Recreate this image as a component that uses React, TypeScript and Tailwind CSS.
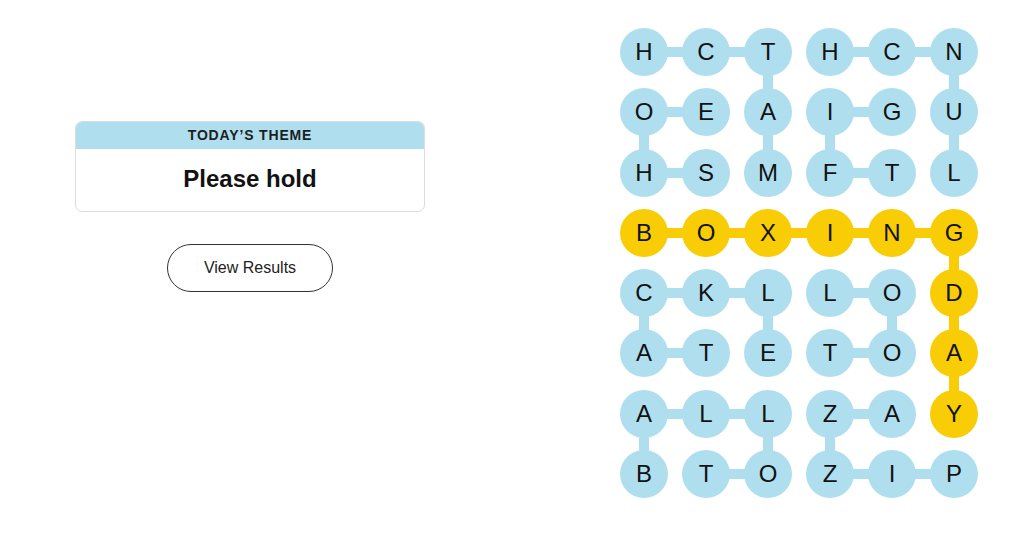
import React from 'react';

const LETTERS = [
  'HCTHCN',
  'OEAIGU',
  'HSMFTL',
  'BOXING',
  'CKLLOD',
  'ATETOA',
  'ALLZAY',
  'BTOZIP',
];

// cells (row, col) that are part of the found spangram
const GOLD = new Set(['3-0', '3-1', '3-2', '3-3', '3-4', '3-5', '4-5', '5-5', '6-5']);

// links to the right neighbour
const RIGHT = new Set([
  '0-0', '0-1', '0-3', '0-4',
  '1-0', '1-3',
  '2-0', '2-3',
  '3-0', '3-1', '3-2', '3-3', '3-4',
  '4-0', '4-1', '4-3',
  '5-0', '5-3',
  '6-0', '6-1', '6-3',
  '7-1', '7-3', '7-4',
]);

// links to the cell below
const DOWN = new Set([
  '0-2', '0-5',
  '1-0', '1-2', '1-3', '1-5',
  '3-5',
  '4-0', '4-2', '4-4', '4-5',
  '5-5',
  '6-0', '6-2', '6-3',
]);

const Cell: React.FC<{ r: number; c: number; ch: string }> = ({ r, c, ch }) => {
  const key = `${r}-${c}`;
  const gold = GOLD.has(key);
  const fill = gold ? 'bg-[#f8cd05]' : 'bg-[#afdfee]';
  const rightGold = gold && GOLD.has(`${r}-${c + 1}`);
  const downGold = gold && GOLD.has(`${r + 1}-${c}`);

  return (
    <div className="relative h-[48px] w-[48px]">
      {RIGHT.has(key) && (
        <div
          className={`absolute left-[40px] top-[19px] h-[10px] w-[30px] ${rightGold ? 'bg-[#f8cd05]' : 'bg-[#afdfee]'}`}
        />
      )}
      {DOWN.has(key) && (
        <div
          className={`absolute left-[19px] top-[40px] h-[28px] w-[10px] ${downGold ? 'bg-[#f8cd05]' : 'bg-[#afdfee]'}`}
        />
      )}
      <div
        className={`relative flex h-full w-full items-center justify-center rounded-full ${fill} text-[24px] leading-none text-[#121212]`}
      >
        {ch}
      </div>
    </div>
  );
};

export default function App() {
  return (
    <div className="flex h-[538px] w-[1024px] bg-white font-['Liberation_Sans',Arial,sans-serif] text-[#121212]">
      {/* Theme + results */}
      <div className="ml-[75px] mt-[121px] flex w-[350px] flex-col items-center">
        <div className="w-full overflow-hidden rounded-[7px] border border-[#dcdcdc]">
          <div className="flex h-[27px] items-center justify-center bg-[#afdfee] text-[14px] font-bold uppercase tracking-[0.06em] text-[#1e1e1e]">
            Today’s Theme
          </div>
          <div className="flex h-[62px] items-center justify-center pb-[3px] text-[24px] font-bold">
            Please hold
          </div>
        </div>
        <button className="mt-[32px] h-[48px] w-[166px] rounded-full border border-[#333] text-[16px] text-[#222]">
          View Results
        </button>
      </div>

      {/* Letter board */}
      <div className="ml-[195px] mt-[28px] grid grid-cols-[repeat(6,48px)] gap-x-[14px] gap-y-[12.3px] self-start">
        {LETTERS.flatMap((row, r) =>
          row.split('').map((ch, c) => <Cell key={`${r}-${c}`} r={r} c={c} ch={ch} />)
        )}
      </div>
    </div>
  );
}
